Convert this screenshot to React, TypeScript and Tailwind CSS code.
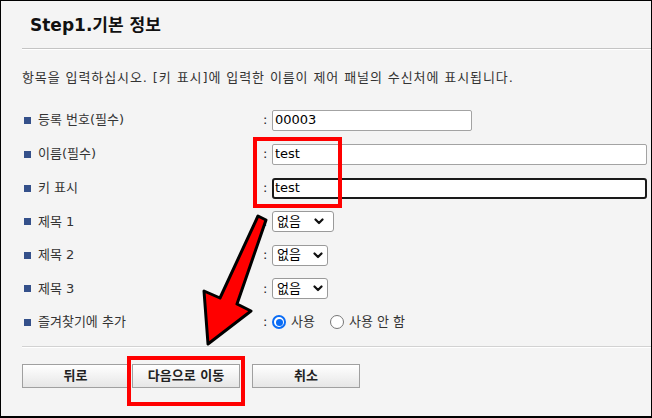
import React from "react";

const font = { fontFamily: '"DejaVu Sans", "Noto Sans CJK KR", sans-serif' };

function Label({ text }: { text: string }) {
  return (
    <div className="w-[262px] pl-[23px] flex items-center gap-[7px] text-[13px] text-[#333]">
      <span className="w-[7px] h-[7px] bg-[#34508a] inline-block" />
      <span>{text}</span>
    </div>
  );
}

function Colon() {
  return <span className="w-[9px] text-[13px] text-[#222]">:</span>;
}

function Chevron() {
  return (
    <svg width="10" height="7" viewBox="0 0 10 7">
      <polyline points="1.5,1.5 5,5 8.5,1.5" fill="none" stroke="#111" strokeWidth="2.2" strokeLinecap="round" strokeLinejoin="round" />
    </svg>
  );
}

function Select({ wide }: { wide?: boolean }) {
  return (
    <div
      className={
        "h-[21px] bg-white border border-[#9a9a9a] rounded-[3px] flex items-center justify-between pl-[4px] text-[13px] text-black " +
        (wide ? "w-[62px] pr-[9px]" : "w-[56px] pr-[4px]")
      }
    >
      <span>없음</span>
      <Chevron />
    </div>
  );
}

export default function App() {
  return (
    <div
      className="relative w-[652px] h-[418px] bg-[#f4f4f4] border border-black border-b-2 overflow-hidden"
      style={font}
    >
      <div className="h-[47px] pl-[29px] pt-[3px] flex items-center text-[17px] font-bold text-[#111]">
        Step1.기본 정보
      </div>
      <div className="ml-[21px] h-[2px] border-t border-[#c4c4c4] bg-white" />
      <div className="pl-[21px] pt-[20px] leading-[16px] text-[13px] tracking-[0.9px] text-[#333]">
        항목을 입력하십시오. [키 표시]에 입력한 이름이 제어 패널의 수신처에 표시됩니다.
      </div>

      <div className="mt-[17px] flex flex-col">
        <div className="h-[34px] flex items-center">
          <Label text="등록 번호(필수)" />
          <Colon />
          <div className="w-[200px] h-[21px] bg-white border border-[#a3a3a3] rounded-[2px] pl-[2px] flex items-center text-[13px] text-black">
            00003
          </div>
        </div>
        <div className="h-[34px] flex items-center">
          <Label text="이름(필수)" />
          <Colon />
          <div className="w-[375px] h-[21px] bg-white border border-[#a3a3a3] rounded-[2px] pl-[2px] flex items-center text-[13px] text-black">
            test
          </div>
        </div>
        <div className="h-[34px] flex items-center">
          <Label text="키 표시" />
          <Colon />
          <div className="w-[375px] h-[21px] bg-white border-2 border-[#1a1a1a] rounded-[3px] pl-[1px] flex items-center text-[13px] text-black">
            test
          </div>
        </div>
        <div className="h-[33px] flex items-center">
          <Label text="제목 1" />
          <Colon />
          <Select wide />
        </div>
        <div className="h-[34px] flex items-center">
          <Label text="제목 2" />
          <Colon />
          <Select />
        </div>
        <div className="h-[33px] flex items-center">
          <Label text="제목 3" />
          <Colon />
          <Select />
        </div>
        <div className="h-[34px] flex items-center">
          <Label text="즐겨찾기에 추가" />
          <Colon />
          <div className="flex items-center text-[13px] text-[#333]">
            <span className="w-[14px] h-[14px] rounded-full border-2 border-[#0a6cf5] bg-white flex items-center justify-center">
              <span className="w-[7px] h-[7px] rounded-full bg-[#0a6cf5]" />
            </span>
            <span className="ml-[5px]">사용</span>
            <span className="ml-[15px] w-[14px] h-[14px] rounded-full border border-[#767676] bg-white" />
            <span className="ml-[5px]">사용 안 함</span>
          </div>
        </div>
      </div>

      <div className="mt-[7px] ml-[21px] h-[2px] border-t border-[#d2d2d2] bg-white" />

      <div className="mt-[16px] pl-[21px] flex items-center text-[13px] font-bold text-[#222]">
        <button className="w-[107px] h-[24px] border border-[#a0a0a0] bg-gradient-to-b from-white to-[#e6e6e6] flex items-center justify-center">
          뒤로
        </button>
        <button className="ml-[3px] w-[108px] h-[24px] border border-[#a0a0a0] bg-gradient-to-b from-white to-[#e6e6e6] flex items-center justify-center">
          다음으로 이동
        </button>
        <button className="ml-[12px] w-[108px] h-[24px] border border-[#a0a0a0] bg-gradient-to-b from-white to-[#e6e6e6] flex items-center justify-center">
          취소
        </button>
      </div>

      <div className="absolute left-[252px] top-[136px] w-[89px] h-[71px] border-4 border-[#ff0000]" />
      <div className="absolute left-[126px] top-[355px] w-[118px] h-[50px] border-4 border-[#ff0000]" />

      <svg className="absolute left-0 top-0 pointer-events-none" width="652" height="418" viewBox="0 0 652 418">
        <polygon
          points="257,215 265,219 236,303 250,310 207,343 203,290 219,297"
          fill="#ff0000"
          stroke="#000"
          strokeWidth="3"
          strokeLinejoin="round"
        />
      </svg>
    </div>
  );
}
